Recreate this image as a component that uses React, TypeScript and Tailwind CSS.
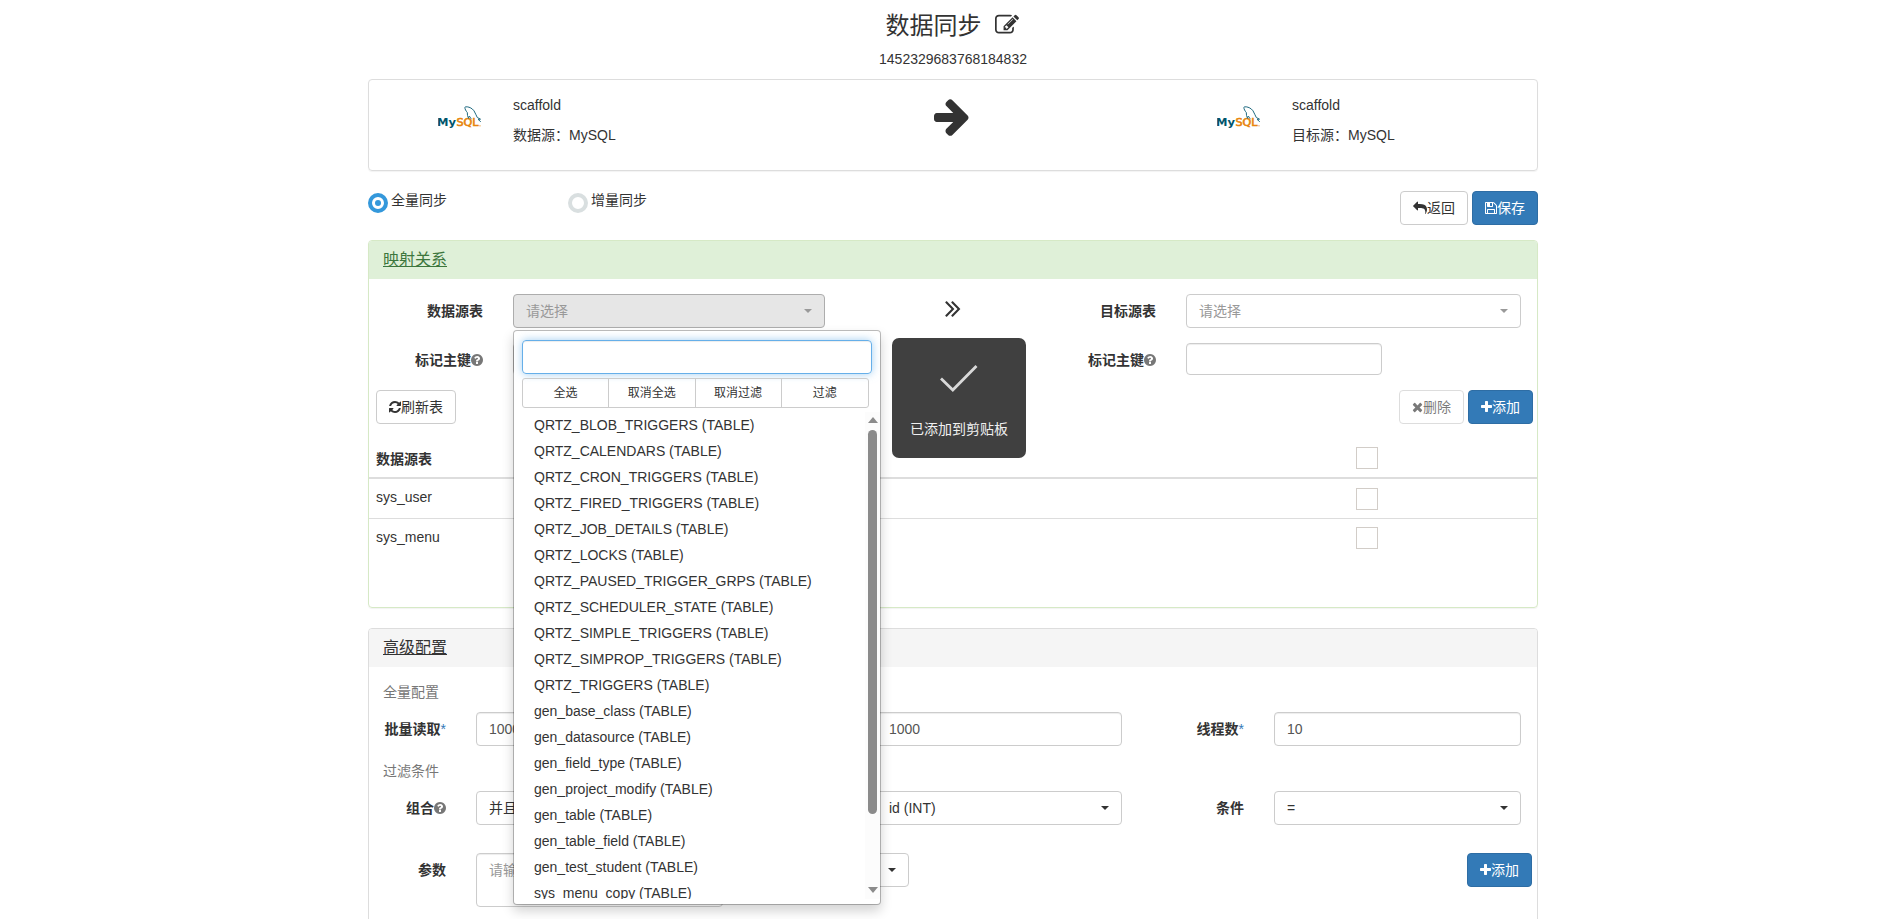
import type { ReactNode } from 'react';
import clsx from 'clsx';

// Font Awesome 4 の字形。y は 0〜1792、x は字形の幅で切り取る
const glyphs = {
  edit: { x: 0, w: 1792, d: 'M888 1184l116-116-152-152-116 116v56h96v96h56zm440-720q-16-16-33 1l-350 350q-17 17-1 33t33-1l350-350q17-17 1-33zm80 594v190q0 119-84.5 203.5t-203.5 84.5h-832q-119 0-203.5-84.5t-84.5-203.5v-832q0-119 84.5-203.5t203.5-84.5h832q63 0 117 25 15 7 18 23 3 17-9 29l-49 49q-14 14-32 8-23-6-45-6h-832q-66 0-113 47t-47 113v832q0 66 47 113t113 47h832q66 0 113-47t47-113v-126q0-13 9-22l64-64q15-15 35-7t20 29zm-96-738l288 288-672 672h-288v-288zm444 132l-92 92-288-288 92-92q28-28 68-28t68 28l152 152q28 28 28 68t-28 68z' },
  arrow: { x: 128, w: 1536, d: 'M1600 960q0 54-37 91l-651 651q-39 37-91 37-51 0-90-37l-75-75q-38-38-38-91t38-91l293-293h-704q-52 0-84.5-37.5t-32.5-90.5v-128q0-53 32.5-90.5t84.5-37.5h704l-293-294q-38-36-38-90t38-90l75-75q38-38 90-38 53 0 91 38l651 651q37 35 37 90z' },
  save: { x: 128, w: 1536, d: 'M512 1536h768v-384h-768v384zm896 0h128v-896q0-14-10-38.5t-20-34.5l-281-281q-10-10-34-20t-39-10v416q0 40-28 68t-68 28h-576q-40 0-68-28t-28-68v-416h-128v1280h128v-416q0-40 28-68t68-28h832q40 0 68 28t28 68v416zm-384-928v-320q0-13-9.5-22.5t-22.5-9.5h-192q-13 0-22.5 9.5t-9.5 22.5v320q0 13 9.5 22.5t22.5 9.5h192q13 0 22.5-9.5t9.5-22.5zm640 32v928q0 40-28 68t-68 28h-1344q-40 0-68-28t-28-68v-1344q0-40 28-68t68-28h928q40 0 88 20t76 48l280 280q28 28 48 76t20 88z' },
  reply: { x: 0, w: 1792, d: 'M1792 640q0 26-19 45l-512 512q-19 19-45 19t-45-19-19-45v-256h-224q-98 0-175.5 6t-154 21.5-133 42.5-105.5 69.5-80 101-48.5 138.5-17.5 181q0 55 5 123 0 6 2.5 23.5t2.5 26.5q0 15-8.5 25t-23.5 10q-16 0-28-17-7-9-13-22t-13.5-30-10.5-24q-127-285-127-451 0-199 53-333 162-403 875-403h224v-256q0-26 19-45t45-19 45 19l512 512q19 19 19 45z' },
  double: { x: 320, w: 1152, d: 'M979 960q0 13-10 23l-466 466q-10 10-23 10t-23-10l-50-50q-10-10-10-23t10-23l393-393-393-393q-10-10-10-23t10-23l50-50q10-10 23-10t23 10l466 466q10 10 10 23zm384 0q0 13-10 23l-466 466q-10 10-23 10t-23-10l-50-50q-10-10-10-23t10-23l393-393-393-393q-10-10-10-23t10-23l50-50q10-10 23-10t23 10l466 466q10 10 10 23z' },
  question: { x: 128, w: 1536, d: 'M1024 1376v-192q0-14-9-23t-23-9h-192q-14 0-23 9t-9 23v192q0 14 9 23t23 9h192q14 0 23-9t9-23zm256-672q0-88-55.5-163t-138.5-116-170-41q-243 0-371 213-15 24 8 42l132 100q7 6 19 6 16 0 25-12 53-68 86-92 34-24 86-24 48 0 85.5 26t37.5 59q0 38-20 61t-68 45q-63 28-115.5 86.5t-52.5 125.5v36q0 14 9 23t23 9h192q14 0 23-9t9-23q0-19 21.5-49.5t54.5-49.5q32-18 49-28.5t46-35 44.5-48 28-60.5 12.5-81zm384 192q0 209-103 385.5t-279.5 279.5-385.5 103-385.5-103-279.5-279.5-103-385.5 103-385.5 279.5-279.5 385.5-103 385.5 103 279.5 279.5 103 385.5z' },
  refresh: { x: 128, w: 1536, d: 'M1639 1056q0 5-1 7-64 268-268 434.5t-478 166.5q-146 0-282.5-55t-243.5-157l-129 129q-19 19-45 19t-45-19-19-45v-448q0-26 19-45t45-19h448q26 0 45 19t19 45-19 45l-137 137q71 66 161 102t187 36q134 0 250-65t186-179q11-17 53-117 8-23 30-23h192q13 0 22.5 9.5t9.5 22.5zm25-800v448q0 26-19 45t-45 19h-448q-26 0-45-19t-19-45 19-45l138-138q-148-137-349-137-134 0-250 65t-186 179q-11 17-53 117-8 23-30 23h-199q-13 0-22.5-9.5t-9.5-22.5v-7q65-268 270-434.5t480-166.5q146 0 284 55.5t245 156.5l130-129q19-19 45-19t45 19 19 45z' },
  remove: { x: 192, w: 1408, d: 'M1490 1322q0 40-28 68l-136 136q-28 28-68 28t-68-28l-294-294-294 294q-28 28-68 28t-68-28l-136-136q-28-28-28-68t28-68l294-294-294-294q-28-28-28-68t28-68l136-136q28-28 68-28t68 28l294 294 294-294q28-28 68-28t68 28l136 136q28 28 28 68t-28 68l-294 294 294 294q28 28 28 68z' },
  plus: { x: 192, w: 1408, d: 'M1600 736v192q0 40-28 68t-68 28h-416v416q0 40-28 68t-68 28h-192q-40 0-68-28t-28-68v-416h-416q-40 0-68-28t-28-68v-192q0-40 28-68t68-28h416v-416q0-40 28-68t68-28h192q40 0 68 28t28 68v416h416q40 0 68 28t28 68z' },
};

const tables = [
  'QRTZ_BLOB_TRIGGERS', 'QRTZ_CALENDARS', 'QRTZ_CRON_TRIGGERS', 'QRTZ_FIRED_TRIGGERS',
  'QRTZ_JOB_DETAILS', 'QRTZ_LOCKS', 'QRTZ_PAUSED_TRIGGER_GRPS', 'QRTZ_SCHEDULER_STATE',
  'QRTZ_SIMPLE_TRIGGERS', 'QRTZ_SIMPROP_TRIGGERS', 'QRTZ_TRIGGERS', 'gen_base_class',
  'gen_datasource', 'gen_field_type', 'gen_project_modify', 'gen_table', 'gen_table_field',
  'gen_test_student', 'sys_menu_copy',
];

function Icon({ name, size = 14, className }: { name: keyof typeof glyphs; size?: number; className?: string }) {
  const g = glyphs[name];
  return (
    <svg
      width={(g.w * size) / 1792}
      height={size}
      viewBox={`${g.x} 0 ${g.w} 1792`}
      fill="currentColor"
      className={clsx('shrink-0', className)}
    >
      <path d={g.d} />
    </svg>
  );
}

function Caret({ className }: { className?: string }) {
  return (
    <span className={clsx('h-0 w-0 border-x-4 border-t-4 border-x-transparent border-t-current', className)} />
  );
}

function Button({ children, primary, className }: { children: ReactNode; primary?: boolean; className?: string }) {
  return (
    <button
      className={clsx(
        'flex h-[34px] shrink-0 items-center justify-center rounded border px-3 leading-5 whitespace-nowrap',
        primary ? 'border-[#2e6da4] bg-[#337ab7] text-white' : 'border-[#ccc] bg-white text-[#333]',
        className,
      )}
    >
      {children}
    </button>
  );
}

function Select({ text, className }: { text: string; className?: string }) {
  return (
    <button className={clsx('flex h-[34px] shrink-0 items-center justify-between rounded border px-3 leading-5', className)}>
      <span>{text}</span>
      <Caret />
    </button>
  );
}

function Input({ value, className }: { value?: string; className?: string }) {
  return (
    <div
      className={clsx(
        'flex shrink-0 items-center rounded border border-[#ccc] bg-white px-3 leading-5 text-[#555] shadow-[inset_0_1px_1px_rgba(0,0,0,0.075)]',
        className,
      )}
    >
      {value}
    </div>
  );
}

function Label({ text, help, required, className }: { text: string; help?: boolean; required?: boolean; className?: string }) {
  return (
    <label className={clsx('flex shrink-0 items-center justify-end leading-5 font-bold', className)}>
      {text}
      {help && <Icon name="question" className="text-[#777]" />}
      {required && <span className="font-normal text-[#337ab7]">*</span>}
    </label>
  );
}

function Checkbox({ className }: { className?: string }) {
  return <span className={clsx('h-[22px] w-[22px] shrink-0 border border-[#d2cdc8] bg-white', className)} />;
}

function MysqlLogo() {
  return (
    <svg width="46" height="26" viewBox="0 0 46 26" className="shrink-0">
      <g fontFamily="'DejaVu Sans'" fontSize="10">
        <text x="-1" y="20.300" textLength="19" lengthAdjust="spacingAndGlyphs" fontWeight="bold" fill="#00546b">My</text>
        <text x="18.500" y="20.300" textLength="22" lengthAdjust="spacingAndGlyphs" fill="#e8850c" stroke="#e8850c" strokeWidth=".6">SQL</text>
      </g>
      <g fill="none" stroke="#1f6a80" strokeLinecap="round" strokeLinejoin="round">
        <path d="M30.500 12L29.500 9.500L29.300 6.500C27.500 4.500 26 1.200 27.500 .800C30.500 .500 34 2 36 4.800C37.500 7 38 9.500 39.300 11.500L42.500 13.200L40 13.300L42.500 15.500" strokeWidth="1" />
        <path d="M30.500 12L31.300 10L33 12.500" strokeWidth=".9" />
      </g>
      <circle cx="42" cy="19.800" r=".6" fill="#e8850c" />
    </svg>
  );
}

function Source({ label }: { label: string }) {
  return (
    <>
      <div className="mt-[26px] w-[75px]">
        <MysqlLogo />
      </div>
      <div className="mt-[15px] w-[200px] leading-5">
        <p>scaffold</p>
        <p className="mt-[10px]">{label}：MySQL</p>
      </div>
    </>
  );
}

function TableMenu() {
  return (
    <div className="absolute top-[36px] left-0 z-10 h-[575px] w-[368px] overflow-hidden rounded border border-black/25 bg-white bg-clip-padding shadow-[0_6px_12px_rgba(0,0,0,0.175)]">
      <div className="mt-[9px] ml-2 h-[34px] w-[350px] rounded border border-[#66afe9] shadow-[inset_0_1px_1px_rgba(0,0,0,0.075),0_0_8px_rgba(102,175,233,0.6)]" />
      <div className="mt-1 ml-2 grid h-[30px] w-[347px] grid-cols-4 divide-x divide-[#ccc] rounded-[3px] border border-[#ccc] text-xs">
        {['全选', '取消全选', '取消过滤', '过滤'].map((text) => (
          <button key={text} className="leading-[26px]">{text}</button>
        ))}
      </div>
      <div className="mt-1 flex h-[487px] overflow-hidden">
        <ul className="flex-1">
          {tables.map((name) => (
            <li key={name} className="h-[26px] pl-5 leading-[26px]">{name} (TABLE)</li>
          ))}
        </ul>
        {/* スクロールバー */}
        <div className="flex w-[15px] flex-col items-center bg-[#fcfcfc]">
          <span className="mt-[5px] h-0 w-0 border-x-[5px] border-b-[6px] border-x-transparent border-b-[#8b8b8b]" />
          <span className="mt-[7px] h-[384px] w-[9px] rounded-full bg-[#8b8b8b]" />
          <span className="mt-[73px] h-0 w-0 border-x-[5px] border-t-[6px] border-x-transparent border-t-[#8b8b8b]" />
        </div>
      </div>
    </div>
  );
}

export default function App() {
  return (
    <div className="h-[919px] overflow-hidden bg-white font-['Liberation_Sans','Noto_Sans_CJK_SC',sans-serif] text-sm leading-5 text-[#333]">
      <div className="ml-[368px] w-[1170px]">
        {/* タイトル */}
        <header className="flex h-[79px] flex-col items-center">
          <h2 className="mt-[12px] mr-[2px] flex h-[27px] items-center text-2xl leading-[27px]">
            数据同步
            <Icon name="edit" size={24} className="-mt-px ml-[13px]" />
          </h2>
          <p className="mt-[10px]">1452329683768184832</p>
        </header>

        {/* 同期元と同期先 */}
        <section className="flex h-[92px] rounded border border-[#ddd] pl-[69px] shadow-[0_1px_1px_rgba(0,0,0,0.05)]">
          <Source label="数据源" />
          <div className="mt-[15px] ml-[221px] w-[283px]">
            <Icon name="arrow" size={42} />
          </div>
          <Source label="目标源" />
        </section>

        <div className="flex h-[69px] pt-5">
          <div className="flex w-[200px] pt-[2px]">
            <span className="flex h-5 w-5 items-center justify-center rounded-full border-4 border-[#3498db]">
              <span className="h-[6px] w-[6px] rounded-full bg-[#3498db]" />
            </span>
            <span className="-mt-[3px] ml-[3px]">全量同步</span>
          </div>
          <div className="flex flex-1 pt-[2px]">
            <span className="h-5 w-5 rounded-full border-4 border-[#d9dfe0]" />
            <span className="-mt-[3px] ml-[3px]">增量同步</span>
          </div>
          <Button className="w-[68px]"><Icon name="reply" className="-scale-x-100" />返回</Button>
          <Button primary className="ml-1 w-[66px]"><Icon name="save" />保存</Button>
        </div>

        {/* マッピング */}
        <section className="h-[368px] rounded border border-[#d6e9c6] shadow-[0_1px_1px_rgba(0,0,0,0.05)]">
          <h3 className="h-[38px] rounded-t-[3px] bg-[#dff0d8] pl-[14px] text-base leading-[38px] text-[#3c763d] underline">映射关系</h3>
          <div className="mt-[15px] flex">
            <Label text="数据源表" className="w-[114px]" />
            <div className="relative ml-[30px] w-[312px]">
              <Select text="请选择" className="w-full border-[#adadad] bg-[#e6e6e6] text-[#999]" />
              <TableMenu />
            </div>
            <div className="w-[220px] pl-[119px]">
              <Icon name="double" size={28} />
            </div>
            <Label text="目标源表" className="w-[111px]" />
            <Select text="请选择" className="ml-[30px] w-[335px] border-[#ccc] text-[#999]" />
          </div>
          <div className="mt-[15px] flex">
            <Label text="标记主键" help className="w-[114px] pt-[2px]" />
            <Input className="ml-[30px] h-8 w-[196px]" />
            <Label text="标记主键" help className="ml-[336px] w-[111px] pt-[2px]" />
            <Input className="ml-[30px] h-8 w-[196px]" />
          </div>
          <div className="mt-[15px] flex px-[7px] pr-1">
            <Button className="mr-auto w-20"><Icon name="refresh" />刷新表</Button>
            <Button className="w-[65px] opacity-65"><Icon name="remove" />删除</Button>
            <Button primary className="ml-1 w-[65px]"><Icon name="plus" />添加</Button>
          </div>
          <div className="flex h-[55px] justify-between border-b-2 border-[#ddd] pt-[23px] pr-[159px] pl-[7px]">
            <span className="mt-[2px] font-bold">数据源表</span>
            <Checkbox />
          </div>
          <div className="flex h-10 justify-between border-b border-[#ddd] pt-[9px] pr-[159px] pl-[7px]">
            <span className="-mt-px">sys_user</span>
            <Checkbox />
          </div>
          <div className="flex justify-between pt-2 pr-[159px] pl-[7px]">
            <span>sys_menu</span>
            <Checkbox />
          </div>
        </section>

        {/* 詳細設定 */}
        <section className="mt-5 h-[320px] rounded border border-[#ddd]">
          <h3 className="h-[38px] rounded-t-[3px] bg-[#f5f5f5] pl-[14px] text-base leading-[38px] underline">高级配置</h3>
          <p className="mt-[15px] pl-[14px] text-[#777]">全量配置</p>
          <div className="mt-[10px] flex">
            <Label text="批量读取" required className="w-[77px]" />
            <Input value="1000" className="ml-[30px] h-[34px] w-[247px]" />
            <Label text="批量写入" required className="w-[123px]" />
            <Input value="1000" className="ml-[30px] h-[34px] w-[246px]" />
            <Label text="线程数" required className="w-[122px]" />
            <Input value="10" className="ml-[30px] h-[34px] w-[247px]" />
          </div>
          <p className="mt-[15px] pl-[14px] text-[#777]">过滤条件</p>
          <div className="mt-[10px] flex">
            <Label text="组合" help className="w-[77px]" />
            <Select text="并且" className="ml-[30px] w-[247px] border-[#ccc]" />
            <Label text="数据源表字段" className="w-[123px]" />
            <Select text="id (INT)" className="ml-[30px] w-[246px] border-[#ccc]" />
            <Label text="条件" className="w-[122px]" />
            <Select text="=" className="ml-[30px] w-[247px] border-[#ccc]" />
          </div>
          <div className="mt-7 flex items-start">
            <Label text="参数" className="h-[34px] w-[77px]" />
            <div className="ml-[30px] h-[54px] w-[247px] rounded border border-[#ccc] px-3 py-[6px] text-[#999] shadow-[inset_0_1px_1px_rgba(0,0,0,0.075)]">
              请输入参数值
            </div>
            <Select text="" className="ml-[126px] w-[60px] border-[#ccc]" />
            <Button primary className="ml-[558px] w-[65px]"><Icon name="plus" />添加</Button>
          </div>
        </section>
      </div>

      {/* コピー完了のトースト */}
      <div className="fixed top-[338px] left-[892px] z-20 flex h-[120px] w-[134px] flex-col items-center rounded-[7px] bg-[#404040] text-[#f0f0f0]">
        <svg width="40" height="30" viewBox="0 0 40 30" fill="none" stroke="#d9d9d9" strokeWidth="2.8" className="mt-[26px]">
          <path d="M2 14.500L13.800 26L37.500 2" />
        </svg>
        <span className="mt-[25px]">已添加到剪贴板</span>
      </div>
    </div>
  );
}
